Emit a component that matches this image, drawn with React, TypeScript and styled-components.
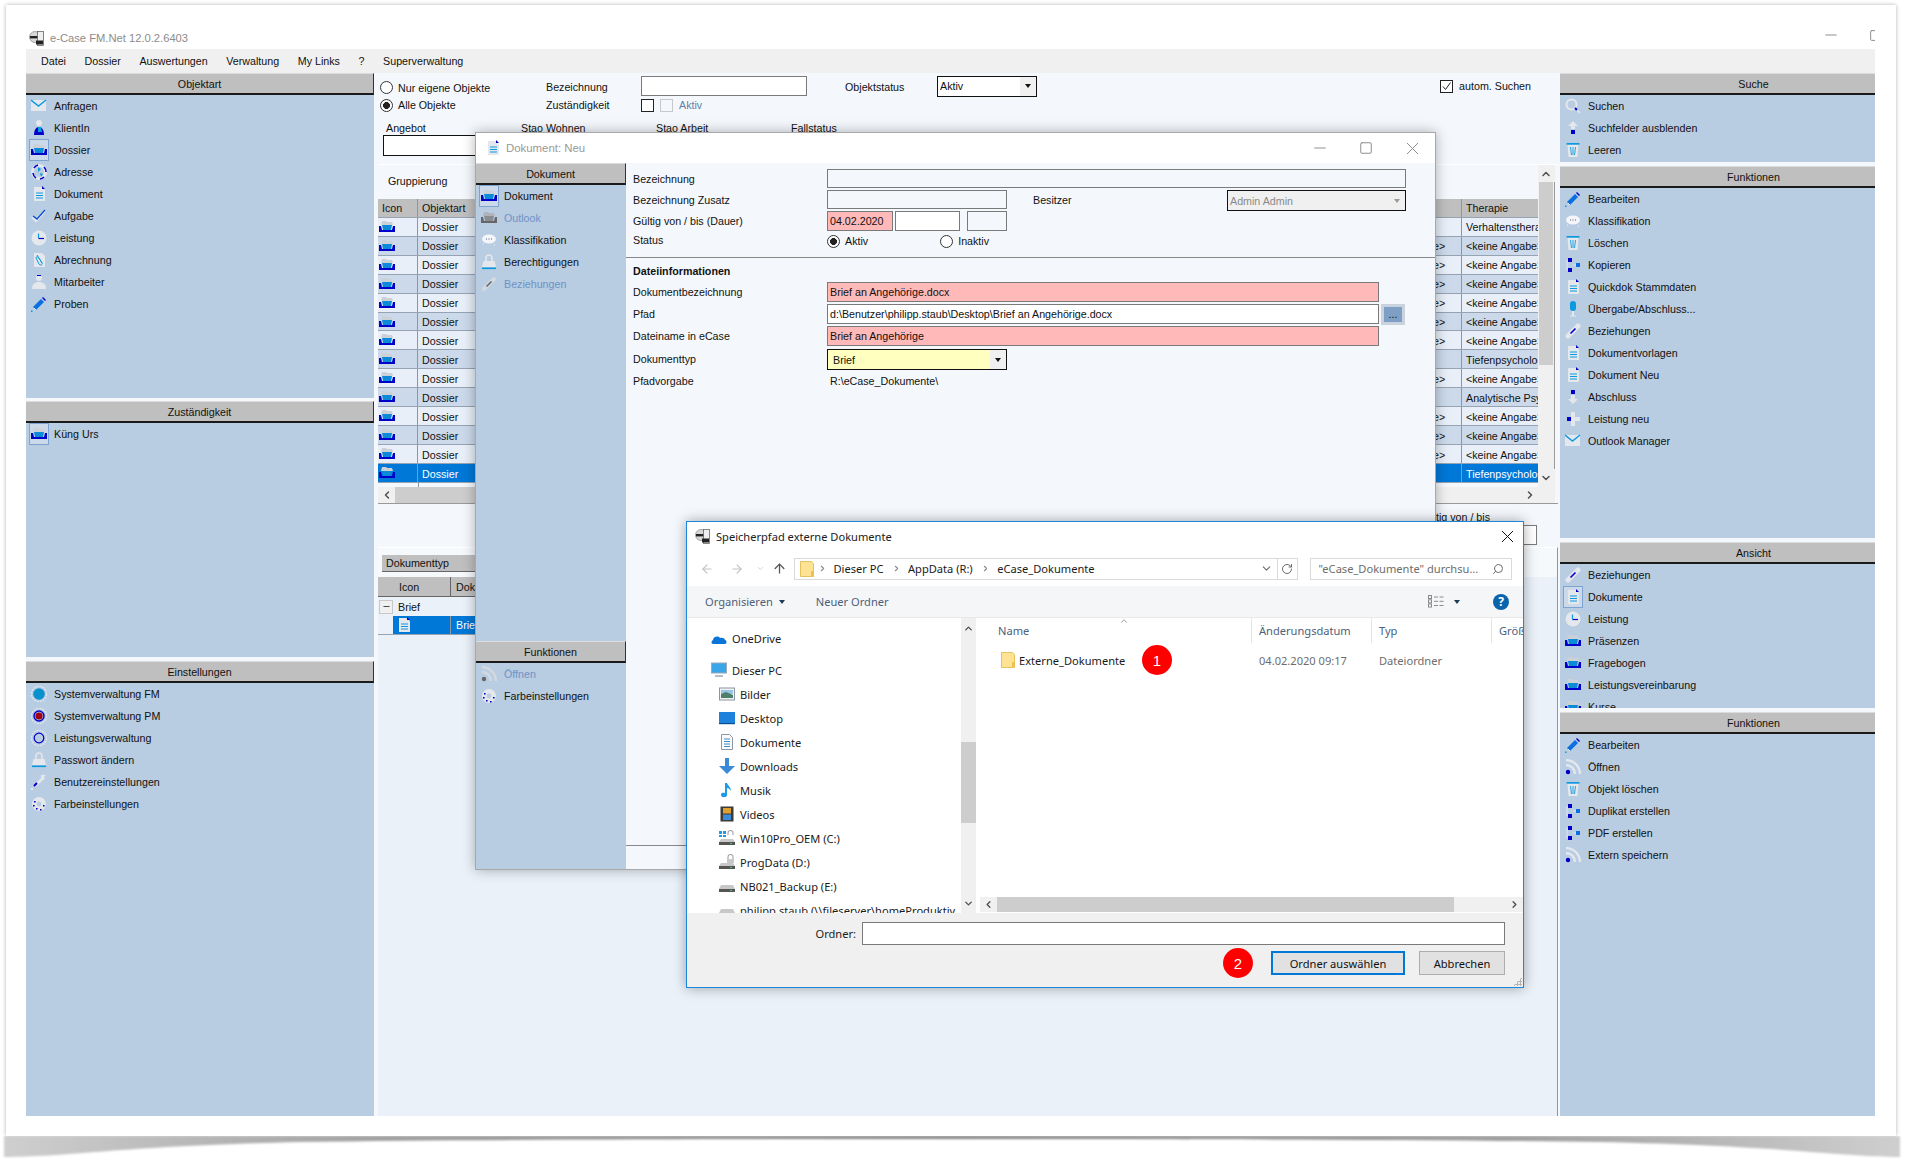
import { ReactNode } from "react";
import styled, { createGlobalStyle } from "styled-components";
import {
  ArrowLeft,
  ArrowRight,
  ArrowUp,
  ChevronDown,
  ChevronLeft,
  ChevronRight,
  ChevronUp,
  Minus,
  RotateCw,
  Search,
  Square,
  X,
} from "lucide-react";

const GlobalStyle = createGlobalStyle`
  html, body {
    margin: 0;
    background: #fff;
    color: #111;
    font-family: "Liberation Sans", Arial, sans-serif;
    font-size: 10.7px;
  }
  * { box-sizing: border-box; }
`;

const BLUE = "#0000c8";
const CYAN = "#0a9ae0";
const HALO = "#e4e7ec";

const ICONS: Record<string, ReactNode> = {
  mail: (
    <>
      <rect x="0" y="2" width="15" height="11" fill={HALO} />
      <polyline points="0,2 7.5,8 15,2" fill="none" stroke={CYAN} strokeWidth="1.4" />
    </>
  ),
  client: (
    <>
      <circle cx="8" cy="3" r="3" fill={HALO} />
      <path d="M3 15c0-5 2-8 5-8s5 3 5 8z" fill={BLUE} />
      <path d="M7 7h3l1 5H7z" fill={CYAN} />
    </>
  ),
  dossier: (
    <>
      <path d="M2 6l1-4h4l1 1h5l1 3z" fill="#ccd1d8" />
      <path d="M0 7h2l1 4h10l1-4h2v6H0z" fill={BLUE} />
      <path d="M3 6h10l-1 5H4z" fill="#0a8ad8" />
    </>
  ),
  dossierOff: (
    <>
      <path d="M2 6l1-4h4l1 1h5l1 3z" fill="#b0b4ba" />
      <path d="M0 7h2l1 4h10l1-4h2v6H0z" fill="#666" />
      <path d="M3 6h10l-1 5H4z" fill="#8a8d92" />
    </>
  ),
  globe: (
    <>
      <circle cx="8" cy="8" r="6.5" fill="none" stroke={HALO} strokeWidth="3" />
      <path d="M3 4a7 7 0 0 1 4-3M13 3a7 7 0 0 1 2 5M2 9a7 7 0 0 0 3 5M9 15a7 7 0 0 0 4-2" fill="none" stroke={BLUE} strokeWidth="1.6" />
      <path d="M7 3l3 2-3 3zM9 9l3 1-2 3z" fill={CYAN} />
    </>
  ),
  doc: (
    <>
      <path d="M3 1h8l3 3v11H3z" fill={HALO} />
      <path d="M11 0l3 3h-3z" fill={BLUE} />
      <path d="M5 7h7M5 9.5h7M5 12h7" stroke={CYAN} strokeWidth="1" />
    </>
  ),
  check: (
    <>
      <polyline points="1,9 5,13 14,3" fill="none" stroke={HALO} strokeWidth="2.4" />
      <polyline points="2,8 6,11 14,2" fill="none" stroke="#0a4fd8" strokeWidth="1.3" />
    </>
  ),
  clock: (
    <>
      <circle cx="8" cy="8" r="7.5" fill={HALO} />
      <path d="M7.5 3.5V8" stroke={CYAN} strokeWidth="1.2" />
      <path d="M7.5 8.5H13" stroke={BLUE} strokeWidth="1.2" />
    </>
  ),
  bill: (
    <>
      <path d="M3 1h8l3 3v11H3z" fill={HALO} />
      <path d="M6 3l5 8c1 2-2 3-3 1L5 6c0-2 2-1 3 0l3 5" fill="none" stroke={CYAN} strokeWidth="1" />
    </>
  ),
  person: (
    <>
      <circle cx="8" cy="4" r="3" fill={HALO} />
      <path d="M6 1.5h4" stroke={BLUE} strokeWidth="1" />
      <path d="M1 15c0-5 3-7 7-7s7 2 7 7z" fill={HALO} />
    </>
  ),
  pen: (
    <>
      <path d="M2 11l8-8 3 3-8 8z" fill="#0a6fe0" />
      <path d="M11 2l1-1 3 3-1 1z" fill={BLUE} />
      <path d="M3 12l2 2" stroke={HALO} strokeWidth="1" />
      <rect x="0" y="14.5" width="1.5" height="1.5" fill={CYAN} />
    </>
  ),
  trash: (
    <>
      <path d="M2.5 3h11l-1 12h-9z" fill={HALO} />
      <rect x="1.5" y="1" width="13" height="1.6" fill={CYAN} />
      <path d="M5.5 5l1 8M8 5v8M10.5 5l-1 8" stroke={CYAN} strokeWidth="0.9" />
    </>
  ),
  search: (
    <>
      <circle cx="6.5" cy="6.5" r="5" fill="none" stroke={HALO} strokeWidth="2" />
      <path d="M10 10l2 2" stroke={BLUE} strokeWidth="2" />
      <path d="M12 12l3 3" stroke={HALO} strokeWidth="1.5" />
    </>
  ),
  up: (
    <>
      <path d="M8 1l5 5h-3v3H6V6H3z" fill={HALO} />
      <rect x="6" y="10" width="4" height="4" fill={BLUE} />
    </>
  ),
  down: (
    <>
      <rect x="6" y="1" width="4" height="4" fill={BLUE} />
      <path d="M6 6h4v4h3l-5 5-5-5h3z" fill={HALO} />
    </>
  ),
  tree: (
    <>
      <rect x="3" y="1" width="4" height="4" fill={BLUE} />
      <rect x="3" y="11" width="4" height="4" fill={BLUE} />
      <rect x="11" y="6" width="4" height="4" fill="#0a6fe0" />
      <path d="M2 3v10M8 8h3" stroke={HALO} strokeWidth="1" />
    </>
  ),
  mic: (
    <>
      <rect x="5" y="0" width="6" height="10" rx="3" fill={CYAN} />
      <path d="M8 10v5" stroke={HALO} strokeWidth="2" />
      <path d="M5 15h6" stroke={HALO} strokeWidth="1" />
    </>
  ),
  link: (
    <>
      <path d="M3 13L13 3" stroke={HALO} strokeWidth="5" strokeLinecap="round" />
      <path d="M5.5 10.5l5-5" stroke={BLUE} strokeWidth="1.6" />
    </>
  ),
  linkOff: (
    <>
      <path d="M3 13L13 3" stroke="#d4d9e0" strokeWidth="4" strokeLinecap="round" />
      <path d="M5.5 10.5l5-5" stroke="#666" strokeWidth="1.6" />
    </>
  ),
  plus: (
    <>
      <path d="M6 1h4v5h5v4h-5v5H6v-5H2V6h4z" fill={HALO} />
      <rect x="2" y="6" width="4" height="4" fill={BLUE} />
    </>
  ),
  rss: (
    <>
      <path d="M1 6a9 9 0 0 1 9 9M1 1a14 14 0 0 1 14 14" fill="none" stroke={HALO} strokeWidth="2.4" />
      <circle cx="3" cy="13" r="2.2" fill={BLUE} />
    </>
  ),
  rssOff: (
    <>
      <path d="M1 6a9 9 0 0 1 9 9M1 1a14 14 0 0 1 14 14" fill="none" stroke="#d4d9e0" strokeWidth="2.4" />
      <circle cx="3" cy="13" r="2.2" fill="#666" />
    </>
  ),
  lock: (
    <>
      <path d="M5 7V4a3 3 0 0 1 6 0v3" fill="none" stroke={HALO} strokeWidth="1.6" />
      <path d="M2.5 7h11l1.5 6H1z" fill={HALO} />
      <rect x="1" y="13.5" width="14" height="1.6" fill={CYAN} />
    </>
  ),
  wrench: (
    <>
      <path d="M4 12L12 4" stroke={HALO} strokeWidth="2.6" />
      <path d="M10 1h5l-2 2 1 2-3 1-1-3z" fill={HALO} />
      <path d="M3 12l3-3" stroke={BLUE} strokeWidth="2" />
      <rect x="0" y="14" width="2" height="2" fill={HALO} />
    </>
  ),
  gear: (
    <>
      <circle cx="8" cy="8" r="7" fill={HALO} />
      <circle cx="8" cy="8" r="2.4" fill="#b8cce2" />
      <path d="M3 5h1.6v1.6H3zM2 9h1.6v1.6H2zM5 12h1.6v1.6H5zM9 13h1.6v1.6H9zM12 9h1.6v1.6H12z" fill={BLUE} />
    </>
  ),
  sysFm: (
    <>
      <circle cx="8" cy="8" r="7.6" fill="none" stroke={HALO} strokeWidth="1.2" strokeDasharray="2 1" />
      <circle cx="8" cy="8" r="5.8" fill="#0a90cc" />
    </>
  ),
  sysPm: (
    <>
      <circle cx="8" cy="8" r="7.6" fill="none" stroke={HALO} strokeWidth="1.2" strokeDasharray="2 1" />
      <circle cx="8" cy="8" r="5" fill="none" stroke={BLUE} strokeWidth="1.4" />
      <circle cx="8" cy="8" r="3.6" fill="#a00010" />
    </>
  ),
  sysLv: (
    <>
      <circle cx="8" cy="8" r="7.6" fill="none" stroke={HALO} strokeWidth="1.2" strokeDasharray="2 1" />
      <circle cx="8" cy="8" r="4.8" fill="#b8cce2" stroke={BLUE} strokeWidth="1.2" />
    </>
  ),
  chat: (
    <>
      <ellipse cx="8" cy="7" rx="7" ry="4.5" fill="#f4f6f9" />
      <path d="M5 7h1M7.5 7h1M10 7h1" stroke="#50607a" strokeWidth="1.2" />
      <path d="M2 12h1M13 13h1" stroke="#f4f6f9" strokeWidth="1" />
    </>
  ),
};

const DRIVE_ICONS: Record<string, ReactNode> = {
  cloud: <path d="M2 14c-2 0-2-3 0-4 0-3 5-5 7-2 3-1 5 1 5 2 2 0 2 4 0 4z" fill="#0a74d8" />,
  monitor: (
    <>
      <rect x="0.5" y="1" width="15" height="10" fill="#3aa5e8" stroke="#9aa8b8" />
      <path d="M4 14h8" stroke="#9aa8b8" strokeWidth="1.5" />
    </>
  ),
  image: (
    <>
      <rect x="0.5" y="2" width="15" height="12" fill="#f2f2f2" stroke="#8a96a2" />
      <path d="M2 4h12v4H2z" fill="#9cc4e4" />
      <path d="M2 8l5-2 7 3v3H2z" fill="#4e7f6a" />
    </>
  ),
  desktop: (
    <>
      <rect x="0" y="2" width="16" height="11" fill="#1e82dc" />
      <rect x="0" y="13" width="16" height="1.2" fill="#0a4f90" />
    </>
  ),
  document: (
    <>
      <path d="M2.5 0.5h8l3 3v12h-11z" fill="#fbfbfb" stroke="#8a96a2" />
      <path d="M5 5h6M5 7.5h6M5 10h6M5 12.5h6" stroke="#3a8cc8" strokeWidth="1" />
    </>
  ),
  download: <path d="M6 0h4v8h6l-8 8-8-8h6z" fill="#3a8ad8" />,
  music: <path d="M6 1h2c1 3 4 4 4 8-1-2-3-3-4-3v7c0 3-6 3-6 0s3-2 4-2z" fill="#1e9ae8" />,
  film: (
    <>
      <rect x="1.5" y="0.5" width="13" height="15" fill="#3b3b3b" />
      <rect x="4" y="2" width="8" height="5.5" fill="#e0a030" />
      <rect x="4" y="8.5" width="8" height="5.5" fill="#3a8ad8" />
    </>
  ),
  osDrive: (
    <>
      <path d="M0 1h3v3H0zM4 1h3v3H4zM0 5h3v2H0zM4 5h3v2H4z" fill="#1e9ae8" />
      <path d="M9 5V3a2.5 2.5 0 0 1 5 0v2" fill="none" stroke="#a8a8a8" strokeWidth="1.2" />
      <path d="M2 9h12l2 3v3H0v-3z" fill="#c8c8c8" />
      <rect x="0" y="12" width="16" height="3" fill="#555" />
      <rect x="11" y="13" width="2" height="1" fill="#3cd05a" />
    </>
  ),
  lockDrive: (
    <>
      <path d="M9 5V3a2.5 2.5 0 0 1 5 0v2" fill="none" stroke="#a8a8a8" strokeWidth="1.2" />
      <rect x="8" y="5" width="7" height="4" fill="#c8c8c8" />
      <path d="M2 9h12l2 3v3H0v-3z" fill="#c8c8c8" />
      <rect x="0" y="12" width="16" height="3" fill="#555" />
      <rect x="11" y="13" width="2" height="1" fill="#3cd05a" />
    </>
  ),
  drive: (
    <>
      <path d="M2 7h12l2 4v3H0v-3z" fill="#c8c8c8" />
      <rect x="0" y="11" width="16" height="3" fill="#555" />
      <rect x="11" y="12" width="2" height="1" fill="#3cd05a" />
    </>
  ),
};

const Icon = ({ name }: { name: string }) => (
  <svg width="16" height="16" viewBox="0 0 16 16" style={{ flex: "none" }}>
    {ICONS[name] ?? DRIVE_ICONS[name]}
  </svg>
);

const AppLogo = () => (
  <svg width="15" height="15" viewBox="0 0 15 15" style={{ flex: "none" }}>
    <circle cx="6" cy="6" r="5.5" fill="#d8d8d8" stroke="#777" strokeWidth="0.6" />
    <rect x="1" y="5" width="9" height="2.4" fill="#222" />
    <rect x="8.5" y="0.5" width="6" height="14" fill="#eee" stroke="#555" strokeWidth="0.7" />
    <rect x="7" y="9.5" width="7" height="4" fill="#222" />
  </svg>
);

const FolderIcon = () => (
  <svg width="14" height="16" viewBox="0 0 14 16" style={{ flex: "none" }}>
    <path d="M0.5 0.5h11l2 2v13H0.5z" fill="#ffe394" stroke="#e4c25e" />
    <rect x="11" y="10" width="2.5" height="5.5" fill="#f0c24c" />
  </svg>
);

const ViewIcon = () => (
  <svg width="16" height="13" viewBox="0 0 16 13" fill="none" stroke="#8a8a8a">
    <rect x="0.5" y="0.5" width="3" height="3" />
    <rect x="0.5" y="4.8" width="3" height="3" />
    <rect x="0.5" y="9" width="3" height="3" />
    <path d="M6 2h4M11.5 2h4M6 6.3h4M11.5 6.3h4M6 10.5h4M11.5 10.5h4" />
  </svg>
);

const Page = styled.div`
  position: relative;
  width: 1909px;
  height: 1165px;
  overflow: hidden;
`;

const Frame = styled.div`
  display: flex;
  flex-direction: column;
  width: 1890px;
  height: 1131px;
  margin: 5px 0 0 6px;
  padding: 12px 21px 20px 20px;
  background: #fff;
  box-shadow: 0 0 4px rgba(0, 0, 0, 0.3);
`;

const CurvedShadow = styled.svg`
  position: absolute;
  left: 0;
  top: 1136px;
`;

const TitleBar = styled.div`
  display: flex;
  align-items: center;
  height: 32px;
  padding: 10px 0 0 3px;
  gap: 6px;
  color: #8c8c8c;
  font-size: 11.2px;
`;

const TitleCaption = styled.div`
  display: flex;
  width: 67px;
  height: 20px;
  margin: -6px 0 0 auto;
  overflow: hidden;
`;

const CaptionButton = styled.div<{ $color?: string; $w?: number }>`
  display: flex;
  align-items: center;
  justify-content: center;
  flex: none;
  width: ${(p) => p.$w ?? 46}px;
  color: ${(p) => p.$color ?? "#8f8f8f"};
`;

const MenuBar = styled.div`
  display: flex;
  align-items: center;
  gap: 18.6px;
  height: 24px;
  padding-left: 15px;
  background: #f0f0f0;
`;

const Body = styled.div`
  display: grid;
  grid-template-columns: 348px 1186px 315px;
  flex: 1;
  min-height: 0;
`;

const SideColumn = styled.div`
  display: flex;
  flex-direction: column;
  background: #f4f8fc;
`;

const Panel = styled.div<{ $h?: number; $gap?: number }>`
  height: ${(p) => (p.$h ? `${p.$h}px` : "auto")};
  flex: ${(p) => (p.$h ? "none" : "1")};
  margin-bottom: ${(p) => p.$gap ?? 0}px;
  background: #b8cce2;
  overflow: hidden;
`;

const PanelHeader = styled.div<{ $edge?: boolean }>`
  display: flex;
  align-items: center;
  justify-content: center;
  height: 22px;
  padding-left: ${(p) => (p.$edge ? 0 : 72)}px;
  background: #bfbfbf;
  border-top: 1px solid #dcdcdc;
  border-bottom: 2px solid #1a1a1a;
  border-right: ${(p) => (p.$edge ? "1.5px solid #333" : "none")};
`;

const SideRow = styled.div<{ $off?: boolean }>`
  display: flex;
  align-items: center;
  gap: 5px;
  height: 22px;
  padding-left: 3px;
  color: ${(p) => (p.$off ? "#6f93c6" : "#111")};
`;

const IconSlot = styled.span<{ $active?: boolean }>`
  display: flex;
  align-items: center;
  justify-content: center;
  width: 20px;
  height: 22px;
  flex: none;
  background: ${(p) => (p.$active ? "#cbd9ea" : "transparent")};
  border: 1px solid ${(p) => (p.$active ? "#7ea3d0" : "transparent")};
`;

type Item = { icon: string; label: string; active?: boolean; off?: boolean };

const SidePanel = ({ title, items, h, gap, edge }: { title: string; items: Item[]; h?: number; gap?: number; edge?: boolean }) => (
  <Panel $h={h} $gap={gap}>
    <PanelHeader $edge={edge}>{title}</PanelHeader>
    {items.map((it) => (
      <SideRow key={it.label} $off={it.off}>
        <IconSlot $active={it.active}>
          <Icon name={it.icon} />
        </IconSlot>
        {it.label}
      </SideRow>
    ))}
  </Panel>
);

const Center = styled.div`
  display: flex;
  flex-direction: column;
  min-width: 0;
  background: #f4f8fc;
`;

const FilterGrid = styled.div`
  display: grid;
  grid-template-columns: 166px 95px 204px 92px 1fr auto;
  grid-template-rows: 20px 18px;
  align-items: center;
  margin-top: 3px;
  padding: 0 29px 0 6px;
`;

const FilterLabel = styled.span`
  padding-top: 1px;
`;

const RadioLine = styled.label`
  display: flex;
  align-items: center;
  gap: 5px;
`;

const FirstRadioLine = styled(RadioLine)`
  padding-top: 3px;
`;

const Radio = styled.span<{ $on?: boolean }>`
  display: inline-block;
  width: 13px;
  height: 13px;
  flex: none;
  border: 1px solid #333;
  border-radius: 50%;
  background: ${(p) => (p.$on ? "radial-gradient(circle, #222 0 3.2px, #fff 3.7px)" : "#fff")};
`;

const Box = styled.span<{ $off?: boolean }>`
  display: inline-flex;
  align-items: center;
  justify-content: center;
  width: 13px;
  height: 13px;
  flex: none;
  border: 1px solid ${(p) => (p.$off ? "#c8c8c8" : "#222")};
  background: ${(p) => (p.$off ? "#f4f8fc" : "#fff")};
`;

const CheckLine = styled.div`
  display: flex;
  align-items: center;
  gap: 6px;
`;

const MutedText = styled.span`
  color: #5f7fa6;
`;

const MutedGray = styled.span`
  color: #8a8a8a;
`;

const Field = styled.div<{ $w: number; $h?: number; $bg?: string; $black?: boolean }>`
  display: flex;
  align-items: center;
  flex: none;
  width: ${(p) => p.$w}px;
  height: ${(p) => p.$h ?? 20}px;
  padding-left: 2px;
  overflow: hidden;
  white-space: nowrap;
  background: ${(p) => p.$bg ?? "transparent"};
  border: 1px solid ${(p) => (p.$black ? "#111" : "#7a7a7a")};
`;

const Combo = styled(Field)`
  justify-content: space-between;
  padding-right: 0;
`;

const ComboArrow = styled.span<{ $dim?: boolean }>`
  display: flex;
  align-items: center;
  justify-content: center;
  width: 16px;
  height: 100%;
  background: #f0f0f0;
  &::after {
    content: "";
    border: 3px solid transparent;
    border-top: 4px solid ${(p) => (p.$dim ? "#9a9a9a" : "#111")};
    margin-top: 3px;
  }
`;

const CriteriaRow = styled.div`
  display: grid;
  grid-template-columns: repeat(4, 135px);
  margin: 8px 0 8px 9px;
`;

const CriteriaCell = styled.div`
  display: flex;
  flex-direction: column;
  height: 34px;
`;

const CriteriaLabel = styled.div`
  height: 13px;
  padding-left: 3px;
  line-height: 13px;
`;

const GroupArea = styled.div`
  display: flex;
  height: 340px;
  margin: 0 2px 0 4px;
  border-top: 1px solid #fff;
  border-bottom: 1px solid #9a9a9a;
`;

const TableColumn = styled.div`
  display: flex;
  flex-direction: column;
  width: 1160px;
`;

const GroupBar = styled.div`
  display: flex;
  align-items: center;
  height: 34px;
  padding: 0 0 2px 10px;
`;

const TableRow = styled.div<{ $tone?: "head" | "odd" | "even" | "selected" }>`
  display: grid;
  grid-template-columns: 40px 82px 864px 98px 76px;
  height: 19px;
  align-items: stretch;
  border-bottom: 1px solid #96a3b2;
  color: ${(p) => (p.$tone === "selected" ? "#fff" : "#111")};
  background: ${(p) =>
    p.$tone === "head" ? "#bfbfbf" : p.$tone === "selected" ? "#0078d7" : p.$tone === "odd" ? "#cbd9ea" : "#e8eff8"};
`;

const Cell = styled.div<{ $last?: boolean }>`
  display: flex;
  align-items: center;
  padding: 1px 0 0 4px;
  overflow: hidden;
  white-space: nowrap;
  border-right: ${(p) => (p.$last ? "none" : "1px solid #8a97a6")};
`;

const IconCell = styled(Cell)`
  padding: 0 0 0 1px;
`;

const TableFiller = styled.div`
  height: 4px;
  margin-left: 40px;
  border-left: 1px solid #8a97a6;
`;

const HScroll = styled.div`
  display: flex;
  align-items: center;
  height: 16px;
  background: #f0f0f0;
`;

const ScrollArrow = styled.div`
  display: flex;
  align-items: center;
  justify-content: center;
  width: 17px;
  height: 100%;
  flex: none;
  color: #505050;
  background: #f0f0f0;
`;

const HThumb = styled.div`
  width: 1000px;
  height: 100%;
  background: #cdcdcd;
`;

const Grow = styled.div`
  flex: 1;
`;

const VScroll = styled.div`
  display: flex;
  flex-direction: column;
  align-items: center;
  width: 17px;
  background: #f0f0f0;
  border-right: 1px solid #9a9a9a;
`;

const VArrow = styled(ScrollArrow)`
  height: 17px;
`;

const VThumb = styled.div`
  width: 14px;
  height: 183px;
  background: #cdcdcd;
`;

const LowerBar = styled.div`
  display: flex;
  justify-content: flex-end;
  height: 43px;
  padding-right: 23px;
`;

const LowerLabel = styled.div`
  margin: 7px 11px 0 0;
`;

const LowerInput = styled(Field)`
  margin-top: 21px;
`;

const LowerGroup = styled.div`
  flex: 1;
  margin: 0 2px 0 4px;
  border-top: 1px solid #fff;
  border-right: 1px solid #8a97a6;
  background: #eaf1f9;
`;

const ChipBar = styled.div`
  height: 29px;
  padding: 7px 0 0 4px;
  background: #f6f9fc;
`;

const Chip = styled.div`
  display: flex;
  align-items: center;
  width: 299px;
  height: 17px;
  padding-left: 4px;
  background: #bfbfbf;
  border-bottom: 1px solid #666;
`;

const BriefHead = styled.div`
  display: grid;
  grid-template-columns: 73px 230px;
  width: 303px;
  height: 20px;
  background: #bfbfbf;
  border-bottom: 1px solid #666;
`;

const BriefHeadCell = styled.div<{ $pad: number }>`
  display: flex;
  align-items: center;
  padding-left: ${(p) => p.$pad}px;
  border-right: 1px solid #666;
`;

const BriefGroupRow = styled.div`
  display: flex;
  align-items: center;
  gap: 5px;
  height: 19px;
  padding-left: 1px;
`;

const Expander = styled.span`
  display: flex;
  align-items: center;
  justify-content: center;
  width: 14px;
  height: 14px;
  background: #f0f0f0;
  border: 1px solid #c8c8c8;
`;

const BriefRowWrap = styled.div`
  width: 303px;
  height: 19px;
  padding-left: 15px;
  border-bottom: 1px solid #96a3b2;
`;

const BriefRow = styled.div`
  display: grid;
  grid-template-columns: 58px 230px;
  height: 18px;
  color: #fff;
  background: #0078d7;
`;

const BriefCell = styled.div<{ $pad: number }>`
  display: flex;
  align-items: center;
  padding-left: ${(p) => p.$pad}px;
  border-right: 1px solid #8a97a6;
`;

/* Dokument: Neu window */
const DocWindow = styled.div`
  position: absolute;
  left: 475px;
  top: 132px;
  display: flex;
  flex-direction: column;
  width: 961px;
  height: 738px;
  background: #fff;
  border: 1px solid #a8a8a8;
  box-shadow: 0 0 12px rgba(0, 0, 0, 0.3);
`;

const DocTitle = styled.div`
  display: flex;
  align-items: stretch;
  height: 30px;
  padding-left: 9px;
  color: #999;
  font-size: 11.4px;
`;

const DocTitleText = styled.div`
  display: flex;
  align-items: center;
  gap: 5px;
  flex: 1;
`;

const DocBody = styled.div`
  display: flex;
  flex: 1;
  min-height: 0;
`;

const DocSide = styled.div`
  display: flex;
  flex-direction: column;
  justify-content: space-between;
  width: 150px;
  background: #b8cce2;
`;

const DocForm = styled.div`
  display: flex;
  flex-direction: column;
  flex: 1;
  padding-top: 6px;
  background: #f4f8fc;
`;

const FormRow = styled.div<{ $h: number }>`
  display: flex;
  align-items: flex-start;
  height: ${(p) => p.$h}px;
  padding-left: 7px;
`;

const FormLabel = styled.div<{ $lh?: number }>`
  width: 194px;
  flex: none;
  line-height: ${(p) => p.$lh ?? 20}px;
`;

const Inline = styled.div<{ $gap?: number }>`
  display: flex;
  align-items: center;
  gap: ${(p) => p.$gap ?? 0}px;
`;

const StatusLine = styled(Inline)`
  height: 18px;
`;

const OwnerLabel = styled.div`
  width: 194px;
  margin-left: 26px;
  line-height: 20px;
`;

const FormRule = styled.div`
  height: 1px;
  background: #888;
`;

const SectionTitle = styled.div`
  display: flex;
  align-items: center;
  height: 24px;
  padding: 2px 0 0 7px;
  font-weight: bold;
`;

const BrowseButton = styled.div`
  display: flex;
  align-items: flex-end;
  justify-content: center;
  width: 24px;
  height: 21px;
  margin-left: 2px;
  padding-bottom: 2px;
  background: #7f9fc4;
  border: 3px solid #c9d2dd;
`;

const PathValue = styled.div`
  padding-left: 3px;
  line-height: 20px;
`;

const FormFoot = styled.div`
  margin-top: auto;
  height: 24px;
  border-top: 1px solid #888;
`;

const SpacerField = styled(Field)`
  margin-left: 5px;
`;

const InactiveRadio = styled(RadioLine)`
  margin-left: 72px;
`;

/* Speicherpfad window */
const FileWindow = styled.div`
  position: absolute;
  left: 686px;
  top: 521px;
  display: flex;
  flex-direction: column;
  width: 838px;
  height: 467px;
  overflow: hidden;
  background: #fff;
  border: 1.5px solid #1a86dc;
  box-shadow: 0 0 12px rgba(0, 0, 0, 0.35);
  font-family: "Noto Sans", "Open Sans", sans-serif;
  font-size: 11.1px;
  color: #1a1a1a;
`;

const FileTitle = styled.div`
  display: flex;
  align-items: center;
  gap: 6px;
  height: 29px;
  padding-left: 8px;
`;

const FileClose = styled.div`
  display: flex;
  margin-left: auto;
  padding-right: 5px;
  color: #111;
`;

const NavRow = styled.div`
  display: flex;
  align-items: center;
  height: 35px;
  padding-left: 6.5px;
`;

const NavButton = styled.span<{ $w: number; $color?: string }>`
  display: flex;
  justify-content: center;
  width: ${(p) => p.$w}px;
  color: ${(p) => p.$color ?? "#c4c4c4"};
`;

const AddressBox = styled.div`
  display: flex;
  align-items: center;
  width: 504px;
  height: 22px;
  margin-left: 2px;
  padding-left: 5px;
  border: 1px solid #d9d9d9;
`;

const Crumb = styled.span`
  margin: 0 4.5px 0 7px;
  white-space: nowrap;
`;

const CrumbSep = styled.span`
  display: flex;
  margin-left: 4px;
  color: #8a8a8a;
`;

const AddressEnd = styled.div`
  display: flex;
  align-items: center;
  height: 100%;
  margin-left: auto;
  color: #6a6a6a;
`;

const RefreshBox = styled.span`
  display: flex;
  align-items: center;
  justify-content: center;
  width: 20px;
  height: 100%;
  margin-left: 4px;
  border-left: 1px solid #d9d9d9;
`;

const SearchBox = styled.div`
  display: flex;
  align-items: center;
  justify-content: space-between;
  width: 202px;
  height: 22px;
  margin-left: 12px;
  padding: 0 7px 0 8px;
  color: #6d6d6d;
  border: 1px solid #d9d9d9;
`;

const Toolbar = styled.div`
  display: flex;
  align-items: center;
  height: 32px;
  padding: 0 14px 0 18px;
  color: #4c607a;
  background: #f5f6f7;
  border-bottom: 1px solid #e8e8e8;
`;

const Caret = styled.span`
  display: inline-block;
  margin-left: 6px;
  border: 3.5px solid transparent;
  border-top: 4px solid #1e3a5a;
  transform: translateY(2px);
`;

const ViewCaret = styled(Caret)`
  margin-left: 10px;
`;

const NewFolder = styled.span`
  margin-left: 31px;
`;

const ToolbarEnd = styled.div`
  display: flex;
  align-items: center;
  margin-left: auto;
`;

const HelpDot = styled.span`
  display: flex;
  align-items: center;
  justify-content: center;
  width: 16px;
  height: 16px;
  margin-left: 33px;
  border-radius: 50%;
  color: #fff;
  background: #0a64ad;
  font-weight: bold;
  font-size: 12px;
`;

const FileBody = styled.div`
  display: flex;
  height: 295px;
`;

const TreePane = styled.div`
  width: 274px;
  padding-top: 8px;
  overflow: hidden;
`;

const TreeRow = styled.div<{ $indent?: boolean; $gap?: number }>`
  display: flex;
  align-items: center;
  gap: 5px;
  height: 24px;
  margin-bottom: ${(p) => p.$gap ?? 0}px;
  padding-left: ${(p) => (p.$indent ? 32 : 24)}px;
  white-space: nowrap;
`;

const TreeScroll = styled.div`
  display: flex;
  flex-direction: column;
  width: 15px;
  flex: none;
  background: #f0f0f0;
`;

const TreeArrow = styled.div`
  display: flex;
  justify-content: center;
  align-items: center;
  height: 20px;
  color: #505050;
`;

const TreeThumb = styled.div`
  height: 81px;
  margin-top: 104px;
  background: #cdcdcd;
`;

const ListPane = styled.div`
  display: flex;
  flex-direction: column;
  flex: 1;
  min-width: 0;
  margin-left: 4px;
`;

const ListGrid = styled.div<{ $h: number }>`
  display: grid;
  grid-template-columns: 272px 120px 120px 1fr;
  align-items: center;
  height: ${(p) => p.$h}px;
  overflow: hidden;
  white-space: nowrap;
`;

const ListHead = styled.div<{ $first?: boolean }>`
  position: relative;
  display: flex;
  align-items: center;
  height: 100%;
  padding-left: ${(p) => (p.$first ? 18 : 7)}px;
  color: #4c607a;
  border-right: 1px solid #e5e5e5;
`;

const SortMark = styled.span`
  position: absolute;
  left: 139px;
  top: -2px;
  display: flex;
  color: #8a8a8a;
`;

const NameCell = styled.div`
  display: flex;
  align-items: center;
  gap: 4px;
  padding-left: 21px;
`;

const MetaCell = styled.div`
  padding-left: 7px;
  color: #6d6d6d;
`;

const FileHScroll = styled.div`
  display: flex;
  align-items: center;
  height: 15px;
  margin-top: auto;
  margin-bottom: 1px;
  background: #f0f0f0;
`;

const FileHThumb = styled.div`
  width: 457px;
  height: 100%;
  background: #cdcdcd;
`;

const FileFooter = styled.div`
  position: relative;
  flex: 1;
  padding: 9px 18px 0 0;
  background: #f0f0f0;
`;

const FolderLine = styled.div`
  display: flex;
  align-items: center;
  justify-content: flex-end;
  gap: 6px;
`;

const FolderInput = styled.div`
  width: 643px;
  height: 23px;
  background: #fff;
  border: 1px solid #7a7a7a;
`;

const ButtonLine = styled.div`
  display: flex;
  justify-content: flex-end;
  gap: 14px;
  margin-top: 6px;
`;

const DialogButton = styled.button<{ $w: number; $primary?: boolean }>`
  width: ${(p) => p.$w}px;
  height: 24px;
  padding: 0;
  font: inherit;
  color: #111;
  background: #e1e1e1;
  border: ${(p) => (p.$primary ? "2px solid #0078d7" : "1px solid #adadad")};
`;

const Grip = styled.span`
  position: absolute;
  right: 1px;
  bottom: 1px;
  width: 9px;
  height: 9px;
  background: radial-gradient(circle, #b4b4b4 1px, transparent 1.2px) 0 0 / 3px 3px;
  clip-path: polygon(100% 0, 100% 100%, 0 100%);
`;

const Badge = styled.span<{ $x: number; $y: number }>`
  position: absolute;
  left: ${(p) => p.$x - 15}px;
  top: ${(p) => p.$y - 15}px;
  display: flex;
  align-items: center;
  justify-content: center;
  width: 30px;
  height: 30px;
  border-radius: 50%;
  color: #fff;
  background: #f00;
  font-family: "Liberation Sans", Arial, sans-serif;
  font-size: 15px;
  box-shadow: 0 0 2px rgba(255, 255, 255, 0.8);
`;

const MENU = ["Datei", "Dossier", "Auswertungen", "Verwaltung", "My Links", "?", "Superverwaltung"];

const THERAPY = [
  ["Kurzberatung", "Verhaltenstherapie"],
  ["<keine Angabe>", "<keine Angabe>"],
  ["<keine Angabe>", "<keine Angabe>"],
  ["<keine Angabe>", "<keine Angabe>"],
  ["<keine Angabe>", "<keine Angabe>"],
  ["<keine Angabe>", "<keine Angabe>"],
  ["<keine Angabe>", "<keine Angabe>"],
  ["", "Tiefenpsychologie"],
  ["<keine Angabe>", "<keine Angabe>"],
  ["", "Analytische Psychotherapie"],
  ["<keine Angabe>", "<keine Angabe>"],
  ["<keine Angabe>", "<keine Angabe>"],
  ["<keine Angabe>", "<keine Angabe>"],
  ["", "Tiefenpsychologie"],
];

const TREE: { icon: string; label: string; indent?: boolean; gap?: number }[] = [
  { icon: "cloud", label: "OneDrive", gap: 8 },
  { icon: "monitor", label: "Dieser PC" },
  { icon: "image", label: "Bilder", indent: true },
  { icon: "desktop", label: "Desktop", indent: true },
  { icon: "document", label: "Dokumente", indent: true },
  { icon: "download", label: "Downloads", indent: true },
  { icon: "music", label: "Musik", indent: true },
  { icon: "film", label: "Videos", indent: true },
  { icon: "osDrive", label: "Win10Pro_OEM (C:)", indent: true },
  { icon: "lockDrive", label: "ProgData (D:)", indent: true },
  { icon: "drive", label: "NB021_Backup (E:)", indent: true },
  { icon: "drive", label: "philipp.staub (\\\\fileserver\\homeProduktiv", indent: true },
];

export default function App() {
  return (
    <Page>
      <GlobalStyle />
      <Frame>
        <TitleBar>
          <AppLogo />
          e-Case FM.Net 12.0.2.6403
          <TitleCaption>
            <CaptionButton $w={45}><Minus size={18} strokeWidth={1} absoluteStrokeWidth /></CaptionButton>
            <CaptionButton $w={45}><Square size={13} strokeWidth={1} absoluteStrokeWidth /></CaptionButton>
          </TitleCaption>
        </TitleBar>
        <MenuBar>
          {MENU.map((m) => (
            <span key={m}>{m}</span>
          ))}
        </MenuBar>
        <Body>
          <SideColumn>
            <SidePanel
              title="Objektart"
              h={325}
              gap={3}
              edge
              items={[
                { icon: "mail", label: "Anfragen" },
                { icon: "client", label: "KlientIn" },
                { icon: "dossier", label: "Dossier", active: true },
                { icon: "globe", label: "Adresse" },
                { icon: "doc", label: "Dokument" },
                { icon: "check", label: "Aufgabe" },
                { icon: "clock", label: "Leistung" },
                { icon: "bill", label: "Abrechnung" },
                { icon: "person", label: "Mitarbeiter" },
                { icon: "pen", label: "Proben" },
              ]}
            />
            <SidePanel title="Zuständigkeit" h={256} gap={4} edge items={[{ icon: "dossier", label: "Küng Urs", active: true }]} />
            <SidePanel
              title="Einstellungen"
              edge
              items={[
                { icon: "sysFm", label: "Systemverwaltung FM" },
                { icon: "sysPm", label: "Systemverwaltung PM" },
                { icon: "sysLv", label: "Leistungsverwaltung" },
                { icon: "lock", label: "Passwort ändern" },
                { icon: "wrench", label: "Benutzereinstellungen" },
                { icon: "gear", label: "Farbeinstellungen" },
              ]}
            />
          </SideColumn>

          <Center>
            <FilterGrid>
              <FirstRadioLine><Radio />Nur eigene Objekte</FirstRadioLine>
              <FilterLabel>Bezeichnung</FilterLabel>
              <Field $w={166} $bg="#fff" />
              <FilterLabel>Objektstatus</FilterLabel>
              <Combo $w={100} $h={21} $bg="#fff" $black>
                Aktiv
                <ComboArrow />
              </Combo>
              <CheckLine>
                <Box>
                  <svg width="11" height="11" viewBox="0 0 11 11">
                    <path d="M2 5.5l2.5 3L9.5 1.5" fill="none" stroke="#222" strokeWidth="1" />
                  </svg>
                </Box>
                autom. Suchen
              </CheckLine>
              <RadioLine><Radio $on />Alle Objekte</RadioLine>
              <span>Zuständigkeit</span>
              <CheckLine>
                <Box />
                <Box $off />
                <MutedText>Aktiv</MutedText>
              </CheckLine>
            </FilterGrid>

            <CriteriaRow>
              <CriteriaCell>
                <CriteriaLabel>Angebot</CriteriaLabel>
                <Field $w={128} $h={21} $bg="#fff" $black />
              </CriteriaCell>
              <CriteriaCell><CriteriaLabel>Stao Wohnen</CriteriaLabel></CriteriaCell>
              <CriteriaCell><CriteriaLabel>Stao Arbeit</CriteriaLabel></CriteriaCell>
              <CriteriaCell><CriteriaLabel>Fallstatus</CriteriaLabel></CriteriaCell>
            </CriteriaRow>

            <GroupArea>
              <TableColumn>
                <GroupBar>Gruppierung</GroupBar>
                <TableRow $tone="head">
                  <Cell>Icon</Cell>
                  <Cell>Objektart</Cell>
                  <Cell />
                  <Cell>Zuständigkeit</Cell>
                  <Cell $last>Therapie</Cell>
                </TableRow>
                {THERAPY.map((row, i) => (
                  <TableRow key={i} $tone={i === 13 ? "selected" : i % 2 ? "odd" : "even"}>
                    <IconCell><Icon name="dossier" /></IconCell>
                    <Cell>Dossier</Cell>
                    <Cell />
                    <Cell>{row[0]}</Cell>
                    <Cell $last>{row[1]}</Cell>
                  </TableRow>
                ))}
                <TableFiller />
                <HScroll>
                  <ScrollArrow><ChevronLeft size={12} strokeWidth={3} /></ScrollArrow>
                  <HThumb />
                  <Grow />
                  <ScrollArrow><ChevronRight size={12} strokeWidth={3} /></ScrollArrow>
                </HScroll>
              </TableColumn>
              <VScroll>
                <VArrow><ChevronUp size={12} strokeWidth={3} /></VArrow>
                <VThumb />
                <Grow />
                <VArrow><ChevronDown size={12} strokeWidth={3} /></VArrow>
                <VArrow />
              </VScroll>
            </GroupArea>

            <LowerBar>
              <LowerLabel>Gültig von / bis</LowerLabel>
              <LowerInput $w={36} $h={20} $bg="#fff" />
            </LowerBar>

            <LowerGroup>
              <ChipBar>
                <Chip>Dokumenttyp</Chip>
              </ChipBar>
              <BriefHead>
                <BriefHeadCell $pad={21}>Icon</BriefHeadCell>
                <BriefHeadCell $pad={5}>Dokumentbezeichnung</BriefHeadCell>
              </BriefHead>
              <BriefGroupRow>
                <Expander><Minus size={9} strokeWidth={2} /></Expander>
                Brief
              </BriefGroupRow>
              <BriefRowWrap>
                <BriefRow>
                  <BriefCell $pad={3}><Icon name="doc" /></BriefCell>
                  <BriefCell $pad={5}>Brief an Angehörige</BriefCell>
                </BriefRow>
              </BriefRowWrap>
            </LowerGroup>
          </Center>

          <SideColumn>
            <SidePanel
              title="Suche"
              h={89}
              gap={4}
              items={[
                { icon: "search", label: "Suchen" },
                { icon: "up", label: "Suchfelder ausblenden" },
                { icon: "trash", label: "Leeren" },
              ]}
            />
            <SidePanel
              title="Funktionen"
              h={372}
              gap={4}
              items={[
                { icon: "pen", label: "Bearbeiten" },
                { icon: "chat", label: "Klassifikation" },
                { icon: "trash", label: "Löschen" },
                { icon: "tree", label: "Kopieren" },
                { icon: "doc", label: "Quickdok Stammdaten" },
                { icon: "mic", label: "Übergabe/Abschluss..." },
                { icon: "link", label: "Beziehungen" },
                { icon: "doc", label: "Dokumentvorlagen" },
                { icon: "doc", label: "Dokument Neu" },
                { icon: "down", label: "Abschluss" },
                { icon: "plus", label: "Leistung neu" },
                { icon: "mail", label: "Outlook Manager" },
              ]}
            />
            <SidePanel
              title="Ansicht"
              h={166}
              gap={4}
              items={[
                { icon: "link", label: "Beziehungen" },
                { icon: "doc", label: "Dokumente", active: true },
                { icon: "clock", label: "Leistung" },
                { icon: "dossier", label: "Präsenzen" },
                { icon: "dossier", label: "Fragebogen" },
                { icon: "dossier", label: "Leistungsvereinbarung" },
                { icon: "dossier", label: "Kurse" },
              ]}
            />
            <SidePanel
              title="Funktionen"
              items={[
                { icon: "pen", label: "Bearbeiten" },
                { icon: "rss", label: "Öffnen" },
                { icon: "trash", label: "Objekt löschen" },
                { icon: "tree", label: "Duplikat erstellen" },
                { icon: "tree", label: "PDF erstellen" },
                { icon: "rss", label: "Extern speichern" },
              ]}
            />
          </SideColumn>
        </Body>
      </Frame>

      <CurvedShadow width="1909" height="29" viewBox="0 0 1909 29">
        <defs>
          <linearGradient id="curve" x1="0" x2="1" y1="0" y2="0">
            <stop offset="0" stopColor="#cfcfcf" />
            <stop offset="0.2" stopColor="#a0a0a0" />
            <stop offset="0.5" stopColor="#868686" />
            <stop offset="0.8" stopColor="#a0a0a0" />
            <stop offset="1" stopColor="#cfcfcf" />
          </linearGradient>
          <filter id="soft">
            <feGaussianBlur stdDeviation="1.2" />
          </filter>
        </defs>
        <path d="M4 0H1900V21C1840 21 1790 10 1600 6 1400 3 1100 3 951 3 800 3 500 3 300 6 120 10 70 21 4 21Z" fill="url(#curve)" filter="url(#soft)" />
      </CurvedShadow>

      <DocWindow>
        <DocTitle>
          <DocTitleText>
            <Icon name="doc" />
            Dokument: Neu
          </DocTitleText>
          <CaptionButton><Minus size={18} strokeWidth={1} absoluteStrokeWidth /></CaptionButton>
          <CaptionButton><Square size={14} strokeWidth={1} absoluteStrokeWidth /></CaptionButton>
          <CaptionButton><X size={21} strokeWidth={1} absoluteStrokeWidth /></CaptionButton>
        </DocTitle>
        <DocBody>
          <DocSide>
            <SidePanel
              title="Dokument"
              edge
              items={[
                { icon: "dossier", label: "Dokument", active: true },
                { icon: "dossierOff", label: "Outlook", off: true },
                { icon: "chat", label: "Klassifikation" },
                { icon: "lock", label: "Berechtigungen" },
                { icon: "linkOff", label: "Beziehungen", off: true },
              ]}
            />
            <SidePanel
              title="Funktionen"
              h={228}
              edge
              items={[
                { icon: "rssOff", label: "Öffnen", off: true },
                { icon: "gear", label: "Farbeinstellungen" },
              ]}
            />
          </DocSide>
          <DocForm>
            <FormRow $h={21}>
              <FormLabel>Bezeichnung</FormLabel>
              <Field $w={579} $h={19} />
            </FormRow>
            <FormRow $h={21}>
              <FormLabel>Bezeichnung Zusatz</FormLabel>
              <Field $w={180} $h={19} />
              <OwnerLabel>Besitzer</OwnerLabel>
              <Combo $w={179} $h={21} $bg="#f0f0f0" $black>
                <MutedGray>Admin Admin</MutedGray>
                <ComboArrow $dim />
              </Combo>
            </FormRow>
            <FormRow $h={21}>
              <FormLabel>Gültig von / bis (Dauer)</FormLabel>
              <Inline $gap={2}>
                <Field $w={66} $bg="#ffb9b9">04.02.2020</Field>
                <Field $w={65} $bg="#fff" />
                <SpacerField $w={40} />
              </Inline>
            </FormRow>
            <FormRow $h={25}>
              <FormLabel $lh={16}>Status</FormLabel>
              <StatusLine>
                <RadioLine><Radio $on />Aktiv</RadioLine>
                <InactiveRadio><Radio />Inaktiv</InactiveRadio>
              </StatusLine>
            </FormRow>
            <FormRule />
            <SectionTitle>Dateiinformationen</SectionTitle>
            <FormRow $h={22}>
              <FormLabel>Dokumentbezeichnung</FormLabel>
              <Field $w={552} $bg="#ffb9b9">Brief an Angehörige.docx</Field>
            </FormRow>
            <FormRow $h={22}>
              <FormLabel>Pfad</FormLabel>
              <Field $w={552} $bg="#fff">d:\Benutzer\philipp.staub\Desktop\Brief an Angehörige.docx</Field>
              <BrowseButton>...</BrowseButton>
            </FormRow>
            <FormRow $h={23}>
              <FormLabel>Dateiname in eCase</FormLabel>
              <Field $w={552} $bg="#ffb9b9">Brief an Angehörige</Field>
            </FormRow>
            <FormRow $h={22}>
              <FormLabel>Dokumenttyp</FormLabel>
              <Combo $w={180} $h={21} $bg="#ffffc0" $black>
                <PathValue>Brief</PathValue>
                <ComboArrow />
              </Combo>
            </FormRow>
            <FormRow $h={20}>
              <FormLabel>Pfadvorgabe</FormLabel>
              <PathValue>R:\eCase_Dokumente\</PathValue>
            </FormRow>
            <FormFoot />
          </DocForm>
        </DocBody>
      </DocWindow>

      <FileWindow>
        <FileTitle>
          <AppLogo />
          Speicherpfad externe Dokumente
          <FileClose><X size={21} strokeWidth={1} absoluteStrokeWidth /></FileClose>
        </FileTitle>
        <NavRow>
          <NavButton $w={26}><ArrowLeft size={14} /></NavButton>
          <NavButton $w={34}><ArrowRight size={14} /></NavButton>
          <NavButton $w={14}><ChevronDown size={9} /></NavButton>
          <NavButton $w={24} $color="#555"><ArrowUp size={15} /></NavButton>
          <AddressBox>
            <FolderIcon />
            <CrumbSep><ChevronRight size={9} strokeWidth={3} /></CrumbSep>
            <Crumb>Dieser PC</Crumb>
            <CrumbSep><ChevronRight size={9} strokeWidth={3} /></CrumbSep>
            <Crumb>AppData (R:)</Crumb>
            <CrumbSep><ChevronRight size={9} strokeWidth={3} /></CrumbSep>
            <Crumb>eCase_Dokumente</Crumb>
            <AddressEnd>
              <ChevronDown size={13} strokeWidth={2} />
              <RefreshBox><RotateCw size={12} /></RefreshBox>
            </AddressEnd>
          </AddressBox>
          <SearchBox>
            "eCase_Dokumente" durchsu...
            <Search size={12} style={{ transform: "scaleX(-1)" }} />
          </SearchBox>
        </NavRow>
        <Toolbar>
          Organisieren<Caret />
          <NewFolder>Neuer Ordner</NewFolder>
          <ToolbarEnd>
            <ViewIcon />
            <ViewCaret />
            <HelpDot>?</HelpDot>
          </ToolbarEnd>
        </Toolbar>
        <FileBody>
          <TreePane>
            {TREE.map((t) => (
              <TreeRow key={t.label} $indent={t.indent} $gap={t.gap}>
                <Icon name={t.icon} />
                {t.label}
              </TreeRow>
            ))}
          </TreePane>
          <TreeScroll>
            <TreeArrow><ChevronUp size={11} strokeWidth={3} /></TreeArrow>
            <TreeThumb />
            <Grow />
            <TreeArrow><ChevronDown size={11} strokeWidth={3} /></TreeArrow>
          </TreeScroll>
          <ListPane>
            <ListGrid $h={25}>
              <ListHead $first>
                Name
                <SortMark><ChevronUp size={10} /></SortMark>
              </ListHead>
              <ListHead>Änderungsdatum</ListHead>
              <ListHead>Typ</ListHead>
              <ListHead>Größe</ListHead>
            </ListGrid>
            <ListGrid $h={34}>
              <NameCell>
                <FolderIcon />
                Externe_Dokumente
              </NameCell>
              <MetaCell>04.02.2020 09:17</MetaCell>
              <MetaCell>Dateiordner</MetaCell>
            </ListGrid>
            <FileHScroll>
              <ScrollArrow><ChevronLeft size={11} strokeWidth={3} /></ScrollArrow>
              <FileHThumb />
              <Grow />
              <ScrollArrow><ChevronRight size={11} strokeWidth={3} /></ScrollArrow>
            </FileHScroll>
          </ListPane>
        </FileBody>
        <FileFooter>
          <FolderLine>
            Ordner:
            <FolderInput />
          </FolderLine>
          <ButtonLine>
            <DialogButton $w={134} $primary>Ordner auswählen</DialogButton>
            <DialogButton $w={86}>Abbrechen</DialogButton>
          </ButtonLine>
          <Grip />
          <Badge $x={551} $y={50}>2</Badge>
        </FileFooter>
        <Badge $x={470} $y={138}>1</Badge>
      </FileWindow>
    </Page>
  );
}
